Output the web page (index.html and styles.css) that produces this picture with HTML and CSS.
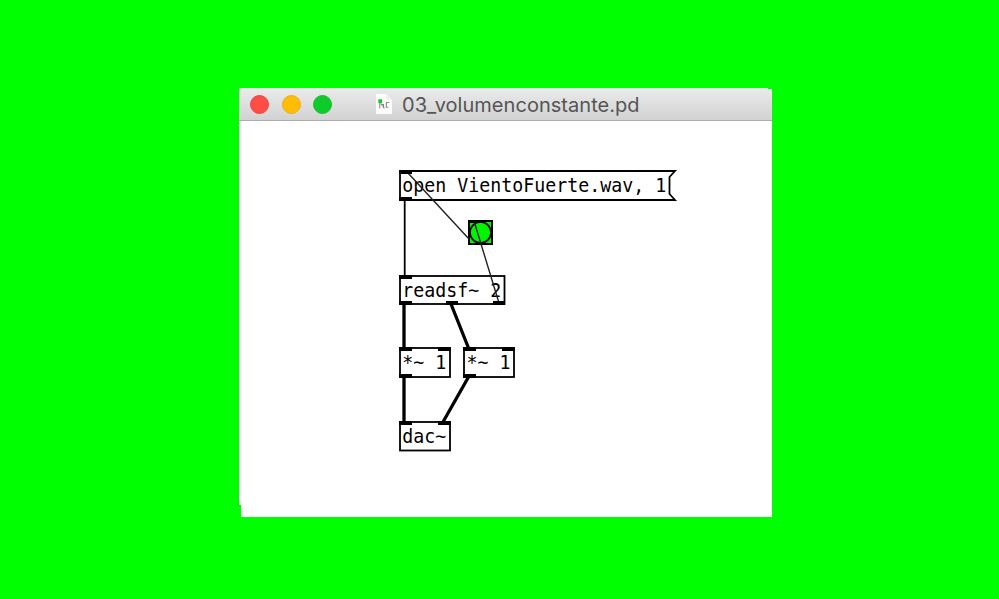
FILE: index.html
```html
<!DOCTYPE html>
<html lang="es">
<head>
<meta charset="utf-8">
<title>03_volumenconstante.pd</title>
<link rel="stylesheet" href="styles.css">
</head>
<body>
<main class="window">
  <header class="titlebar">
    <div class="controls"><span class="dot close"></span><span class="dot minimize"></span><span class="dot expand"></span></div>
    <svg class="doc-icon" width="16" height="20" viewBox="0 0 17 21">
      <path d="M0 0H11L17 6V21H0Z" fill="#fbfbfb"/>
      <path d="M11 0V6H17" fill="#eee"/>
      <path d="M4 8V15M5 10L9 15M6 11H8V15M14 9H11V14H13" fill="none" stroke="#888" stroke-width="1.1"/>
      <rect x="2.5" y="5.500" width="4" height="4" fill="#12c72b"/>
    </svg>
    <h1 class="title">03_volumenconstante.pd</h1>
  </header>
  <svg class="patch" width="533" height="396" viewBox="239 121 533 396">
    <g class="box">
      <path d="M400 171H675L669.500 177V194L675 200H400Z"/>
      <rect x="400" y="276" width="104.500" height="28"/>
      <rect x="400" y="348" width="50" height="29"/>
      <rect x="464" y="348" width="50" height="29"/>
      <rect x="400" y="422" width="50" height="28.500"/>
    </g>
    <g class="label">
      <text transform="translate(402.300 191.500) scale(1 1.070)" textLength="264">open VientoFuerte.wav, 1</text>
      <text transform="translate(402.300 296.500) scale(1 1.070)" textLength="99">readsf~ 2</text>
      <text transform="translate(402.300 368.500) scale(1 1.070)" textLength="44">*~ 1</text>
      <text transform="translate(466.500 368.500) scale(1 1.070)" textLength="44">*~ 1</text>
      <text transform="translate(402.300 442.500) scale(1 1.070)" textLength="44">dac~</text>
    </g>
    <g class="bang">
      <rect x="469" y="221" width="23" height="23"/>
      <circle cx="480.500" cy="232.500" r="10.500"/>
    </g>
    <path class="control" d="M404.700 200V276"/>
    <path class="control thin" d="M408 173L469 239M499 303L474 221"/>
    <path class="signal" d="M404 304V348M451 304L468.500 348M404 377V422M468.500 377L443 422"/>
    <path class="port" d="M399 170h13v4h-13zM399 197h13v4h-13zM399 275h13v4h-13zM399 301h13v4h-13zM446 301h12v4h-12zM493 301h12v4h-12zM399 347h13v4h-13zM438 347h13v4h-13zM399 374h13v4h-13zM463 347h13v4h-13zM502 347h13v4h-13zM463 374h13v4h-13zM399 421h13v4h-13zM438 421h13v4h-13z"/>
    <path class="port" d="M468 220h8v3h-8z"/>
  </svg>
</main>
</body>
</html>
```
FILE: styles.css
```css
body {
  margin: 0;
  height: 599px;
  overflow: hidden;
  background: #00ff00;
}
.window {
  width: 533px;
  height: 429px;
  margin: 88px 0 0 239px;
  display: flex;
  flex-direction: column;
  background: #fff;
  clip-path: polygon(0 0, 528px 0, 529px 1px, 100% 1px, 100% 100%, 2px 100%, 2px 417px, 0 417px);
}
.titlebar {
  box-sizing: border-box;
  height: 33px;
  flex: none;
  display: flex;
  align-items: center;
  padding-left: 11px;
  background: linear-gradient(#ebebeb, #d2d2d2);
  border-bottom: 1px solid #adadad;
}
.controls {
  display: flex;
  gap: 12.500px;
  width: 126px;
}
.dot {
  box-sizing: border-box;
  width: 19px;
  height: 19px;
  border-radius: 50%;
}
.close { background: #ff4d45; border: 1px solid #ed4740; }
.minimize { background: #ffbd08; border: 1px solid #eeb014; }
.expand { background: #0ecb2c; border: 1px solid #15bd2b; }
.doc-icon { flex: none; }
.title {
  margin: 1px 0 0 10px;
  font: 400 20px/30px Inter, sans-serif;
  letter-spacing: 0.040px;
  color: #555;
  white-space: nowrap;
}
.patch { display: block; flex: none; }
.box { fill: #fff; stroke: #000; stroke-width: 1.800; }
.label { font: 18.270px "DejaVu Sans Mono", monospace; fill: #000; }
.bang { fill: #00f500; stroke: #000; stroke-width: 2; }
.bang circle { stroke-width: 1.700; }
.control { fill: none; stroke: #000; stroke-width: 1.800; }
.thin { stroke: #222; stroke-width: 1.400; }
.signal { fill: none; stroke: #000; stroke-width: 3.300; }
.port { fill: #000; }
```
